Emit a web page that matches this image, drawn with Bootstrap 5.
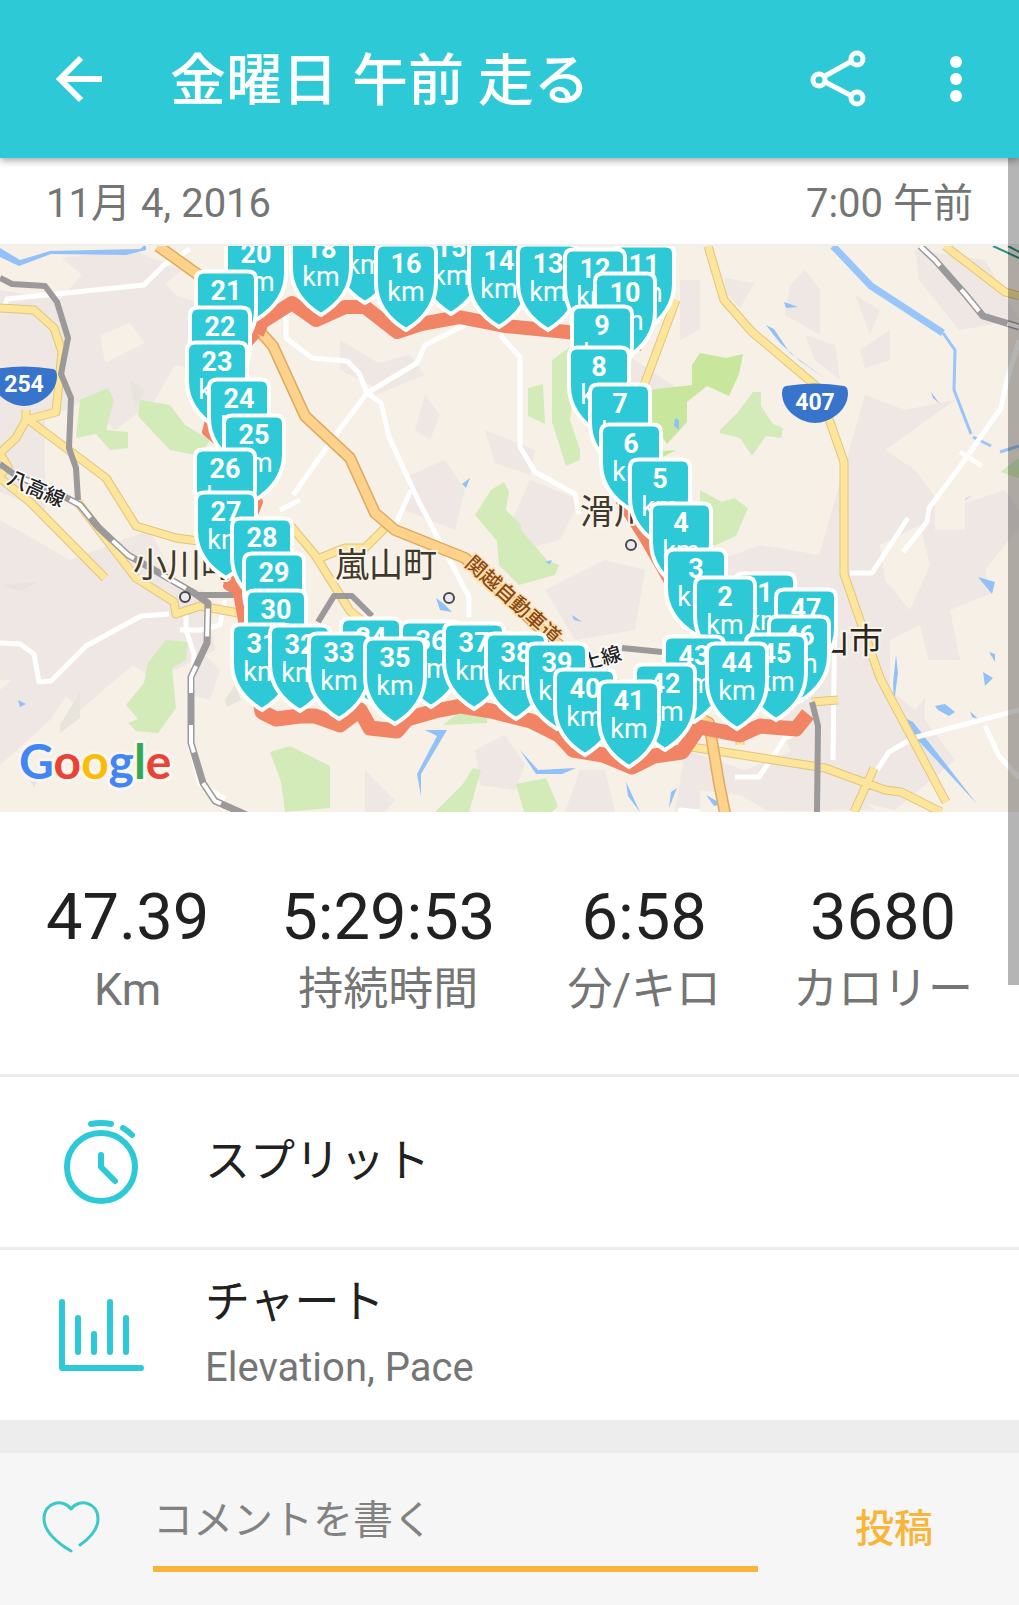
<!DOCTYPE html>
<html lang="ja">
<head>
<meta charset="utf-8">
<meta name="viewport" content="width=device-width, initial-scale=1">
<title>金曜日 午前 走る</title>
<link href="https://cdn.jsdelivr.net/npm/bootstrap@5.3.0/dist/css/bootstrap.min.css" rel="stylesheet">
<style>
  :root { --aqua: #2ec9d7; --ink: #212121; --muted: #757575; --amber: #f9b53a; }
  body { font-family: Roboto, "Noto Sans CJK JP", sans-serif; color: var(--ink); background: #fff; }
  .app-header { height: 158px; background: var(--aqua); padding: 0 36px 0 48px; box-shadow: 0 2px 8px rgba(0,0,0,.4); z-index: 5; }
  .app-title { font-size: 56px; line-height: 64px; color: #fff; font-weight: 500; padding: 4px 0 0 12px; }
  .icon-btn { border: 0; background: none; padding: 0; line-height: 0; }
  .share-btn { margin-right: 60px; }
  .date-row { height: 86px; padding: 6px 46px 0; font-size: 40px; line-height: 48px; color: var(--muted); }
  .map-view { border-top: 2px solid #f1eeee; }
  .map-view svg { display: block; width: 100%; height: auto; }
  .stats { padding: 72px 46px 54px; height: 262px; }
  .stat-num { font-size: 65px; line-height: 66px; }
  .stat-label { font-size: 45px; line-height: 64px; margin-top: 8px; color: var(--muted); }
  .menu-row { height: 173px; border-top: 3px solid #ececec; color: var(--ink); }
  .menu-icon { width: 205px; padding-left: 56px; }
  .menu-title { font-size: 45px; line-height: 60px; font-weight: 400; }
  .menu-sub { font-size: 40px; line-height: 60px; margin-top: 5px; color: var(--muted); }
  .divider-band { height: 33px; background: #ededed; }
  .comment-bar { background: #f6f6f6; height: 153px; padding: 0 26px 0 40px; }
  .like-btn { padding-bottom: 6px; }
  .comment-box { width: 605px; height: 84px; border: 0; border-bottom: 6px solid var(--amber); background: none; font-size: 40px; line-height: 60px; padding: 0 0 14px; margin-left: 51px; margin-top: 1px; outline: 0; min-width: 0; color: var(--ink); }
  .comment-box::placeholder { color: #828282; opacity: 1; }
  .post-btn { border: 0; background: none; color: var(--amber); font-size: 39px; font-weight: 500; padding: 0 60px; white-space: nowrap; }
  .scroll-thumb { top: 158px; right: 0; width: 11px; height: 827px; background: rgba(0,0,0,.29); z-index: 4; }
  .place { font-size: 34px; font-weight: 400; fill: #40382a; paint-order: stroke; stroke: #f9f4ea; stroke-width: 4px; }
  .rail-name { font-size: 20px; font-weight: 500; fill: #222; paint-order: stroke; stroke: #fff; stroke-width: 3px; }
  .pin-num { font: 700 27px Roboto, sans-serif; fill: #fff; text-anchor: middle; }
  .pin-km { font: 400 27px Roboto, sans-serif; fill: #fff; text-anchor: middle; }
  .shield-num { font: 700 23px Roboto, sans-serif; fill: #fff; text-anchor: middle; }
  .g-logo { font: 700 48px Lato, sans-serif; paint-order: stroke; stroke: #faf6ef; stroke-width: 6px; stroke-linejoin: round; }
</style>
<script src="https://cdn.jsdelivr.net/npm/bootstrap@5.3.0/dist/js/bootstrap.bundle.min.js"></script>
</head>
<body class="position-relative">
<header class="app-header d-flex align-items-center position-relative">
  <button class="icon-btn" type="button" aria-label="戻る">
    <svg width="62" height="62" viewBox="0 0 62 62" fill="none" stroke="#fff" stroke-width="6"><path d="M54 31H13M33 10 12 31l21 21"/></svg>
  </button>
  <h1 class="app-title mb-0 ms-5 flex-grow-1">金曜日 午前 走る</h1>
  <button class="icon-btn share-btn" type="button" aria-label="共有">
    <svg width="64" height="64" viewBox="0 0 64 64" fill="none" stroke="#fff" stroke-width="5"><path d="M20 29 47 14M20 35 47 49"/><circle cx="14" cy="33" r="6"/><circle cx="52" cy="12" r="6"/><circle cx="52" cy="51" r="6"/></svg>
  </button>
  <button class="icon-btn" type="button" aria-label="メニュー">
    <svg width="54" height="60" viewBox="0 0 54 60" fill="#fff"><circle cx="27" cy="13" r="6"/><circle cx="27" cy="30" r="6"/><circle cx="27" cy="47" r="6"/></svg>
  </button>
</header>

<main>
  <div class="date-row d-flex justify-content-between align-items-center"><span>11月 4, 2016</span><span>7:00 午前</span></div>

  <section class="map-view" aria-label="ルート地図">
    <svg viewBox="0 246 1019 566" role="img">
      <defs>
        <g id="pin"><path d="M-22-18.500H22q8 0 8 8V20C30 40 18 56 0 67-18 56-30 40-30 20v-30.500q0-8 8-8z" fill="#2ec9d7" stroke="#fff" stroke-width="4"/></g>
        <g id="route-shield"><path d="M-29-17Q0-22 29-17 33-16 33-10C33 8 14 20 0 20S-33 8-33-10Q-33-16-29-17z" fill="#3874cb"/></g>
      </defs>
      <rect y="240" width="1019" height="580" fill="#f6f0e6"/>
      <g fill="#eee7e4">
        <path d="M0 290l60 10 30-35 60 0 25 30 60 20-10 60-50-10-20 35-40 30-30-30-40 20 0 90-50-20-35-30z"/>
        <path d="M62 258l70-8 50 20-30 25-60-12zM0 520l70 40 80-30 30 60-40 40 10 20-70 60-30-30-50 0zM95 580l110 10 10 60-60 30-30-20zM0 690l60-50 30 20-40 60-50 45z"/>
        <path d="M370 365l40-10 15 20-50 20zM425 395l15 20-10 25-15-10zM485 430l50 20-5 25-35-12zM410 475l35-15 20 30-10 40-50-20zM530 480l50 20-20 40-40 10-10-25zM545 590l60-30 40 10-10 60-60 10zM475 750l30-15 20 30-10 25-35-5zM580 770l25 0 10 42-50 0zM365 770l30 30-10 12-20 0z"/>
        <path d="M680 280l20 0 0 50-20 10zM725 278l30 5-15 25-15-15zM790 285l15-15 15 20 0 45-35-20zM855 295l25 15-10 25zM805 335l30 10 5 35-25-20zM860 350l30-20 0 30-25 8zM915 250l70 10 34 60-60 10-40-50z"/>
        <path d="M865 395l40 15 50-10-70 50 30 20 30 40 60-20 20 30-40 50 20 90-80 0 0 60 30 40-60 50-90-20-30-80-60-20 20-100 80-20zM685 750l60 20 50-20 80 60-200 2z"/>
        <path d="M560 360l60-10 60 40-30 40-40-10zM400 255l60-8 20 20-60 20zM680 575l80-30 60 10-10 70-90 10zM200 650l20 20-10 30-20-5zM340 340l50 30-10 20-40-20z"/>
      </g>
      <g fill="#f6f0e6"><path d="M880 545l40-20 10 40-20 45-25-30zM890 640l30-15 15 60-20 25-25-20zM950 610l50-20 8 80-40 30zM100 335l30-12 15 20-40 20zM700 790l40 5 30 17-70 0zM935 500l30 0 0 30-30 0z"/></g>
      <g fill="#e9e3de"><path d="M60 725l18-30 2-5 0 28-20 15zM25 770l14 8-5 10zM0 585l38-3-18 9zM225 700l10-15 6 15-14 7zM130 380l15 10-10 18z"/></g>
      <g fill="#d3ebb9">
        <path d="M80 400l28-12 6 12-8 30 22 2 0 16-18 2-14-16-20 4zM140 400l30 5 15 20 25 15-10 16-30-6-32-34zM166 640l22 2-2 18-14 8 4 40-18 25-22-2-8-8 10-4-12-14 18-22 4-20z"/>
        <path d="M270 752l20-6 40 20 0 42-45 4-4-30zM435 812l28-28 10-16 8 2-12 42zM516 784l30-6 12 28-6 6-28 0zM443 725l20-16 24 6 0 8z"/>
        <path d="M475 515l16-25 13-8 5 10-3 18 15 15 0 5 26 30 12 5-4 10-36 10-20-20-2-24zM528 388l15-4 2 40-17-8zM552 360l28-20-10 80 10 30 0 10-14 6-14-44z"/>
        <path d="M648 390l44-5 0-20 8-12 26 5 17-4-4 20-10 22-22-10-20 16 0 20-20 22-20-30zM648 452l28-2-22 12z" fill="#c9e69d"/>
        <path d="M720 430l18-18 15-20 8 0 0 14 12 18 10 4-2 10-15-2-14 20-12-18-20-5zM700 490l22 12 12-4 14 10-12 28-22 10-14-20zM1000 472l19-14 0 20z"/>
      </g>
      <g fill="#92c1f8"><path d="M0 248l20 12 30-9 90-2 6-5 0 6-20 5-75-1-32 12-19-9z"/><path d="M675 418l4 2 0 10-5-4zM462 484l8-6-4 10zM784 302l14 5-12 1zM931 392l9 12-7-6zM965 499l8-4-8 5zM978 577l17 5-3 12zM983 672l10 6-8 8zM989 652l6 2 0 8zM935 706l10-2 10 8-6 4-11-6zM970 711l8 8-6-2zM436 598l8 6 8 8-12-2zM545 562l7-2-2 4zM572 615l10 7-8-2zM18 700l8 4-6 3z"/><path d="M766 325l8 4 16 24 36 26-26-18-20-18zM896 655l2 18-4 30-1-20zM893 712l20 10 64 82-74-80zM626 782l14 30-12-16zM677 788l-8 20 2-16zM706 795l16 9-8 2zM425 730l22 0-26 44 0 22-4-22 20-38zM520 750l18 20 38-2-14 6-26 0z"/></g>
      <g fill="none" stroke="#98c6fb" stroke-linejoin="round">
        <path d="M833 246l38 40 72 47" stroke-width="7"/><path d="M943 333l12 17-1 40 17 44" stroke-width="3"/><path d="M973 437l18 9M1000 452l19-6" stroke-width="3"/>
      </g>
      <g fill="none" stroke="#fff" stroke-width="5" stroke-linejoin="round">
        <path d="M5 305l2-6 137-14 20-20 26-16M286 300v38l26 20 35 3 12 12 8 20-30 40-44 62M367 393l50-30 8-18 44-22M367 393l14 10 8 34 30 65 50 95 0 20M500 335l20 22 0 90 15 25 40 22 4 20M411 490l-18 40M0 643l20 1 14 10 5 28 12-1 35-35 55-30 28-2M186 615l0 15 8 24-4 90 10 40 25 15M180 630h20l20-5 5-25M690 818l-10-8 20 2M735 777l24 0 15-22 10-16 18-10M835 600l-2 160M850 573l22 0 36-55M877 770l12-18 24-14 106-28M985 726l14 30 20 22M1019 340l-12 40-6 28-42 60-30 40-2 14-24 30M960 452l22 14M280 510l20-10"/>
      </g>
      <g fill="none" stroke-linejoin="round">
        <g stroke="#dfc67c" stroke-width="9"><path d="M0 308l34 2 20 18 8 24-6 60-30 8M26 410l0 10-10 18-16 15 8 14-8 8M26 418l80 60 30 48 40 12 30 4M0 478l30 24 75 76M708 246l16 54 28 32 64 54 14 36 14 40 0 112 18 52 18 52 66 124M685 746l140 22 60 22 16 2 40 20M874 768l-20 44M740 745v-16M812 702l26-2"/><path d="M76 500l60 78 38 24 2 12 24-8 44 8M290 525l25 30 35 56 15 12M315 560l30-12 20 0 22-22M945 246l60 46 14 4M676 300l-36 96"/></g>
        <g stroke="#fde59c" stroke-width="7"><path d="M0 308l34 2 20 18 8 24-6 60-30 8M26 410l0 10-10 18-16 15 8 14-8 8M26 418l80 60 30 48 40 12 30 4M0 478l30 24 75 76M708 246l16 54 28 32 64 54 14 36 14 40 0 112 18 52 18 52 66 124M685 746l140 22 60 22 16 2 40 20M874 768l-20 44M740 745v-16M812 702l26-2"/><path d="M76 500l60 78 38 24 2 12 24-8 44 8M290 525l25 30 35 56 15 12M315 560l30-12 20 0 22-22M945 246l60 46 14 4M676 300l-36 96"/></g>
        <path d="M158 246l42 30 55 50 18 20 32 70 45 42 25 55 20 17 70 28 80 75 60 50 50 10 54 30 10 60 7 35" stroke="#dcaa62" stroke-width="12"/>
        <path d="M158 246l42 30 55 50 18 20 32 70 45 42 25 55 20 17 70 28 80 75 60 50 50 10 54 30 10 60 7 35" stroke="#ffd28c" stroke-width="9"/>
        <g stroke="#9b9999" stroke-width="6"><path d="M0 278l12 6 33 2 12 16 11 36-7 36 10 24-2 50 7 20 2 32M0 464l15 11M198 595h46M318 622l16-26h18l20 20M622 648l40 4M812 702l6 24-1 86"/><path d="M15 475l50 22 15 8 18 22 30 28 66 38 14 10-1 40-16 34v66l12 40 12 18 45 20M920 246l15 14 30 34 18 22 36 11" stroke-width="7"/></g>
        <path d="M15 475l50 22 15 8 18 22 30 28 66 38 14 10-1 40-16 34v66l12 40 12 18 45 20M920 246l15 14 30 34 18 22 36 11" stroke="#fff" stroke-width="4" stroke-dasharray="28 32"/>
        <path d="M993 246l26 12M1008 246l11 6" stroke="#2a9087" stroke-width="2"/>
        <g stroke="#f28466">
          <path d="M257 334l5-12 30-19 24 17 29-13 20 0 32 25 24-8 38-7 46 9 62 6 75 12" stroke-width="14"/>
          <path d="M257 334l-36 40-15 58 24 20 29 50-20 50-12 34 14 8" stroke-width="8"/>
          <path d="M226 574l14 16 22 122 14 7 24-3 15 0 25 9 20-15 10 18 27 3 10-12 28-8 26-5 30 5 40 10 28 14 14 15 30 5 29 12 22-11 28-4 17-25 41 8 20-9 36 3 12-15" stroke-width="15"/>
          <path d="M620 500l24 38 40 70 26 24 60-9" stroke-width="10"/>
        </g>
      </g>
      <g fill="#eceaf0" stroke="#4a4a4a" stroke-width="2"><circle cx="185" cy="597" r="5"/><circle cx="449" cy="598" r="5"/><circle cx="631" cy="545" r="5"/></g>
      <text class="place" x="133" y="577">小川町</text>
      <text class="place" x="335" y="577">嵐山町</text>
      <text class="place" x="580" y="524">滑川町</text>
      <text class="place" x="781" y="653" style="fill:#2a2520">松山市</text>
      <text class="rail-name" transform="translate(6 483) rotate(24)">八高線</text>
      <text class="rail-name" transform="translate(464 565) rotate(42)" style="fill:#8a4a12;stroke:#ffe0b0">関越自動車道</text>
      <text class="rail-name" transform="translate(565 676) rotate(-16)">東上線</text>
      <use href="#route-shield" x="24" y="386"/><text class="shield-num" x="24" y="392">254</text>
      <use href="#route-shield" x="815" y="403"/><text class="shield-num" x="815" y="410">407</text>
      <g id="pins"></g>
      <text class="g-logo" x="19" y="779"><tspan fill="#4285f4">G</tspan><tspan fill="#ea4335">o</tspan><tspan fill="#fbbc05">o</tspan><tspan fill="#4285f4">g</tspan><tspan fill="#34a853">l</tspan><tspan fill="#ea4335">e</tspan></text>
    </svg>
  </section>

  <section class="stats d-flex justify-content-between text-center">
    <div><div class="stat-num">47.39</div><div class="stat-label">Km</div></div>
    <div><div class="stat-num">5:29:53</div><div class="stat-label">持続時間</div></div>
    <div><div class="stat-num">6:58</div><div class="stat-label">分/キロ</div></div>
    <div><div class="stat-num">3680</div><div class="stat-label">カロリー</div></div>
  </section>

  <nav>
    <a href="#split" class="menu-row d-flex align-items-center text-decoration-none">
      <span class="menu-icon"><svg width="90" height="90" viewBox="0 0 90 90" fill="none" stroke="#2ec9d7" stroke-width="6" stroke-linecap="round"><circle cx="45" cy="50" r="34"/><path d="M45 38v12l14 14" stroke-linejoin="round"/><path d="M35 7q10-2 20 0M67 11q5 3 9 7"/></svg></span>
      <span class="menu-title">スプリット</span>
    </a>
    <a href="#chart" class="menu-row d-flex align-items-center text-decoration-none">
      <span class="menu-icon"><svg width="90" height="90" viewBox="0 0 90 90" fill="none" stroke="#2ec9d7" stroke-width="6" stroke-linecap="round" stroke-linejoin="round"><path d="M6 12v66h79M22 28v34M38 44v18M54 12v50M70 28v34"/></svg></span>
      <span class="d-flex flex-column"><span class="menu-title">チャート</span><span class="menu-sub">Elevation, Pace</span></span>
    </a>
  </nav>
  <div class="divider-band"></div>
</main>

<form class="comment-bar d-flex align-items-center">
  <button class="icon-btn like-btn" type="button" aria-label="いいね">
    <svg width="62" height="56" viewBox="0 0 62 56" fill="none" stroke="#3cc8c8" stroke-width="3" stroke-linecap="round" stroke-linejoin="round"><path d="M31 52C17 44 4 32 4 20 4 3 23-1 31 10 39-1 58 3 58 20c0 10-8 19-18 26"/></svg>
  </button>
  <input class="comment-box" type="text" placeholder="コメントを書く" aria-label="コメントを書く">
  <button class="post-btn ms-auto" type="button">投稿</button>
</form>
<div class="scroll-thumb position-absolute"></div>

<script>
  // kilometre markers: [km, x, y] where y is the middle of the number
  const marks = [[20,256,253],[18,321,248],[17,365,236],[16,406,263],[15,451,247],[14,499,260],[13,548,263],[12,595,268],[11,644,264],[10,625,292],[9,602,325],[8,599,366],[7,620,403],[6,631,443],[5,660,478],[4,681,522],[3,696,568],[2,725,596],[1,765,592],[47,806,608],[46,799,635],[45,776,653],[44,737,662],[43,694,655],[42,665,683],[41,629,700],[40,585,688],[39,557,662],[38,516,652],[37,474,642],[36,431,640],[35,395,657],[34,371,637],[33,339,652],[32,300,644],[31,262,643],[30,276,609],[29,274,572],[28,262,537],[27,226,511],[26,225,468],[25,254,434],[24,239,398],[23,217,361],[22,220,326],[21,226,290]];
  marks.sort((a, b) => a[2] - b[2]);
  document.getElementById('pins').innerHTML = marks.map(([km, x, y]) =>
    `<g transform="translate(${x} ${y})"><use href="#pin"/><text class="pin-num" y="10">${km}</text><text class="pin-km" y="38">km</text></g>`).join('');
</script>
</body>
</html>
